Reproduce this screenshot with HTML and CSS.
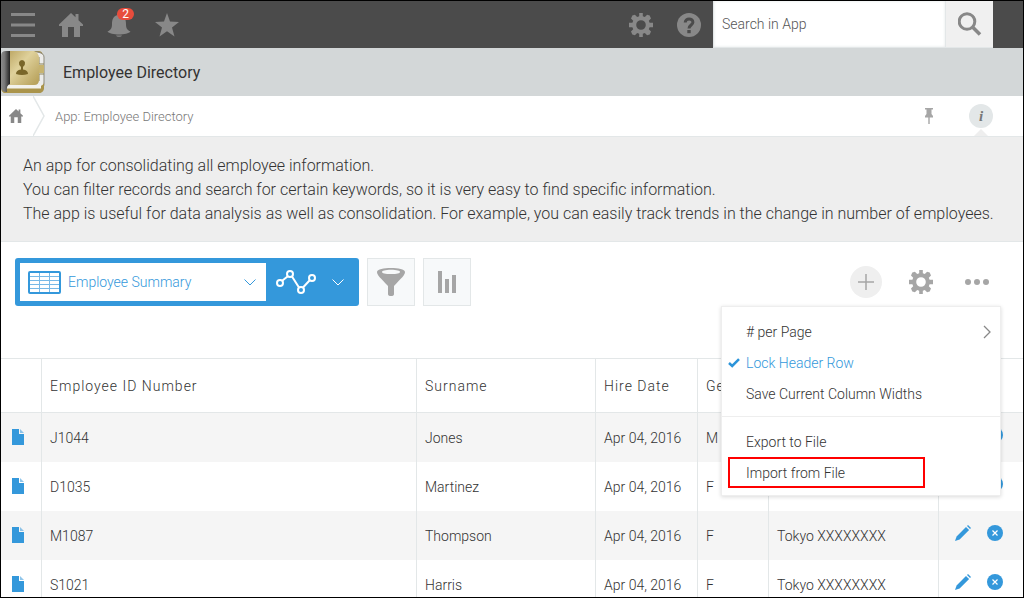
FILE: index.html
```html
<!DOCTYPE html>
<html lang="en">
<head>
<meta charset="utf-8">
<title>Employee Directory</title>
<link rel="stylesheet" href="styles.css">
</head>
<body>
<svg class="sprite" aria-hidden="true">
  <symbol id="house" viewBox="0 0 24 24"><path d="M12 0 16.5 4.300V1H19.500V7.200L24 11.500V13H21V24H15V14H9V24H3V13H0V11.500Z"/></symbol>
  <symbol id="gear" viewBox="0 0 24 24"><path fill-rule="evenodd" d="M10.200 0h3.600v3.300l2 .8 2.300-2.300 2.600.8 1.300 3-2.200 2.200.8 2h3.400v4.400h-3.400l-.8 2 2.200 2.200-1.300 3-2.600.8-2.300-2.300-2 .8V24h-3.600v-3.300l-2-.8-2.300 2.300-2.600-.8-1.300-3 2.200-2.200-.8-2H0V9.800h3.400l.8-2L2 5.600l1.300-3 2.600-.8 2.300 2.300 2-.8ZM12 7.200a4.800 4.800 0 1 0 0 9.600 4.800 4.800 0 0 0 0-9.600Z"/></symbol>
  <symbol id="document" viewBox="0 0 12 16"><path d="M0 0H7V5H12V16H0Z"/><path d="M8 0 12 4H8Z" opacity=".55"/></symbol>
  <symbol id="pencil" viewBox="0 0 16 16"><path d="M11 1.900 14.100 5 4.600 14.400 0 16 1.600 11.400Z"/><path d="M12 1 13 0 16 3 15 4Z"/></symbol>
  <symbol id="remove" viewBox="0 0 16 16"><circle cx="8" cy="8" r="8"/><path d="M5.500 5.500 10.500 10.500M10.500 5.500 5.500 10.500" stroke="#fff" stroke-width="1.200"/></symbol>
</svg>
<div class="app">
  <header class="topbar">
    <nav class="topbar-nav">
      <button class="icon-button" aria-label="Menu"><svg class="icon" viewBox="0 0 24 24"><path d="M0 0H24V3H0ZM0 10.500H24V13.500H0ZM0 21H24V24H0Z"/></svg></button>
      <a class="icon-button" href="#" aria-label="Portal"><svg class="icon"><use href="#house"/></svg></a>
      <button class="icon-button" aria-label="Notifications"><svg class="icon" viewBox="0 0 24 24"><path d="M12 0C13.500 0 14 1 14 2.200 18 3.500 19 7 19 11 19 15 20 17 23.500 18.500 22 20.500 17 21.500 12 21.500S2 20.500.5 18.500C4 17 5 15 5 11 5 7 6 3.500 10 2.200 10 1 10.500 0 12 0Z"/><path d="M9 22.500H15C14.500 24.300 9.500 24.300 9 22.500Z"/></svg><span class="count">2</span></button>
      <button class="icon-button" aria-label="Bookmarks"><svg class="icon" viewBox="0 0 24 24"><path d="M12 0 15 8.600 24 8.900 17 14.500 19.500 23.500 12 18.200 4.500 23.500 7 14.500 0 8.900 9 8.600Z"/></svg></button>
    </nav>
    <div class="topbar-tools">
      <button class="icon-button" aria-label="Settings"><svg class="icon"><use href="#gear"/></svg></button>
      <button class="icon-button" aria-label="Help"><svg class="icon" viewBox="0 0 24 24"><circle cx="12" cy="12" r="12"/><path d="M8.200 9.500C8.200 4.800 15.900 4.800 15.900 9.200 15.900 12 12 12 12 15.500" fill="none" stroke="#4b4b4b" stroke-width="3"/><path d="M10.300 17H13.700V20.200H10.300Z" fill="#4b4b4b"/></svg></button>
    </div>
    <form class="search">
      <input class="search-input" type="text" placeholder="Search in App" aria-label="Search in App">
      <button class="search-button" type="button" aria-label="Search"><svg class="icon" viewBox="0 0 24 24"><circle cx="9" cy="9.500" r="7.800" fill="none" stroke="#888" stroke-width="3"/><path d="M14.500 15 22 22.500" stroke="#888" stroke-width="3.500"/></svg></button>
    </form>
  </header>

  <div class="titlebar">
    <svg class="app-logo" viewBox="0 0 44 45" aria-hidden="true">
      <defs>
        <linearGradient id="cover" x2="1" y2="1"><stop offset="0" stop-color="#bda765"/><stop offset=".4" stop-color="#dfd19b"/><stop offset="1" stop-color="#b39c54"/></linearGradient>
        <linearGradient id="spine"><stop offset="0" stop-color="#8b8b8b"/><stop offset=".4" stop-color="#777"/><stop offset="1" stop-color="#222"/></linearGradient>
      </defs>
      <path d="M7 1H37Q42 1 42 6V38Q42 43 37 43H5Q0 43 0 37Z" fill="#a18c49"/>
      <path d="M8 2H36Q43 3 43 7V34Q43 38 38 38H6Z" fill="#ececea" stroke="#8d8a7c"/>
      <path d="M37 15H43V23H37Z" fill="#c6b36f"/>
      <path d="M38 7V14H43M43 24H38V31" fill="none" stroke="#8b8358"/>
      <path d="M6 36H39Q43 35 43 32V39Q42 43 38 43H5Q1 43 1 39Z" fill="#aa944b"/>
      <path d="M6 35H40V38.500H5Z" fill="#f3f2ec"/>
      <path d="M8 1H33Q38 3 38 8V30Q38 35 33 35H8Z" fill="url(#cover)"/>
      <path d="M5 1H9V34Q5 35 6 42 0 42 0 37V6Q0 1 5 1Z" fill="url(#spine)"/>
      <path d="M15 24Q15 20 20 19.500V17Q17.500 15 18 12.500 18.500 10 21 10T24 12.500Q24.500 15 22 17V19.500Q27 20 27 24 21 26 15 24Z" fill="#796629"/>
    </svg>
    <h1 class="title">Employee Directory</h1>
  </div>

  <div class="breadcrumb">
    <a class="crumb-home" href="#" aria-label="Home"><svg class="crumb-icon"><use href="#house"/></svg></a>
    <svg class="crumb-divider" viewBox="0 0 12 40" aria-hidden="true"><path d="M0 0 11 20 0 40" fill="none" stroke="#e3e7e8" stroke-width="1.500"/></svg>
    <a class="crumb-link" href="#">App: Employee Directory</a>
    <button class="pin" aria-label="Pin"><svg class="pin-icon" viewBox="0 0 8 16"><path d="M0 0H8V1.500H6.500V6L8 8V9.500H4.700V16H3.300V9.500H0V8L1.500 6V1.500H0Z"/></svg></button>
    <button class="info" aria-label="App description"><span class="info-mark">i</span></button>
  </div>

  <section class="description">
    <p>An app for consolidating all employee information.</p>
    <p>You can filter records and search for certain keywords, so it is very easy to find specific information.</p>
    <p>The app is useful for data analysis as well as consolidation. For example, you can easily track trends in the change in number of employees.</p>
  </section>

  <div class="toolbar">
    <div class="view-picker">
      <div class="view-field">
        <svg class="grid-icon" viewBox="0 0 33 23" aria-hidden="true"><path d="M1 5.500H32M1 9.500H32M1 13.500H32M1 17.500H32M11.500 1V22M21.500 1V22" stroke="#78b9e6"/><rect x="1" y="1" width="31" height="21" rx="1" fill="none" stroke="#3498db" stroke-width="2"/></svg>
        <select class="view-select" aria-label="View"><option>Employee Summary</option></select>
        <svg class="chevron" viewBox="0 0 12 7" aria-hidden="true"><path d="M.5.500 6 6 11.500.500" fill="none" stroke="#3498db"/></svg>
      </div>
      <button class="graph-button" aria-label="Graphs">
        <svg class="graph-icon" viewBox="0 0 40 24"><g fill="none" stroke="#fff" stroke-width="2"><path d="M6.500 10.500 11.500 6.500M16 6.500 23 17.500M27 17.500 33.500 10.500"/><circle cx="4" cy="13" r="3"/><circle cx="14" cy="4" r="3"/><circle cx="25" cy="20" r="3"/><circle cx="36" cy="8" r="3"/></g></svg>
        <svg class="chevron" viewBox="0 0 12 7"><path d="M.5.500 6 6 11.500.500" fill="none" stroke="#fff"/></svg>
      </button>
    </div>
    <button class="square-button" aria-label="Filter"><svg class="square-icon" viewBox="0 0 28 28"><path fill-rule="evenodd" d="M0 4C0-1.300 28-1.300 28 4 28 7 24.500 10 17 18V26Q17 28 14 28T11 26V18C3.500 10 0 7 0 4ZM14 1.800C2 1.800 2 6 14 6S26 1.800 14 1.800Z"/></svg></button>
    <button class="square-button" aria-label="Chart"><svg class="square-icon" viewBox="0 0 28 28"><path d="M5 3H9V25H5ZM12 11H16V25H12ZM19 7H23V25H19Z"/></svg></button>
    <div class="toolbar-actions">
      <button class="add" aria-label="Add record"><svg class="add-icon" viewBox="0 0 16 16"><path d="M0 8H16M8 0V16" stroke="#a6a6a6" stroke-width="1.500"/></svg></button>
      <button class="icon-button light" aria-label="App settings"><svg class="icon"><use href="#gear"/></svg></button>
      <button class="icon-button light" aria-label="Options"><svg class="icon" viewBox="0 0 24 24"><circle cx="3" cy="12" r="3"/><circle cx="12" cy="12" r="3"/><circle cx="21" cy="12" r="3"/></svg></button>
    </div>
    <div class="menu">
      <button class="menu-item">
        <span># per Page</span>
        <svg class="menu-arrow" viewBox="0 0 8 14"><path d="M1 1 7 7 1 13" fill="none" stroke="#888" stroke-width="1.300"/></svg>
      </button>
      <button class="menu-item checked">
        <svg class="check" viewBox="0 0 12 10"><path d="M1 5 4.200 8 11 1.200" fill="none" stroke="#2b94da" stroke-width="2.500"/></svg>
        <span>Lock Header Row</span>
      </button>
      <button class="menu-item">Save Current Column Widths</button>
      <hr class="menu-rule">
      <button class="menu-item">Export to File</button>
      <button class="menu-item highlighted">Import from File</button>
    </div>
  </div>

  <table class="records">
    <colgroup><col class="col-open"><col><col class="col-surname"><col class="col-date"><col class="col-gender"><col class="col-address"><col class="col-actions"></colgroup>
    <thead>
      <tr><th></th><th>Employee ID Number</th><th>Surname</th><th>Hire Date</th><th>Gender</th><th></th><th></th></tr>
    </thead>
    <tbody>
      <tr>
        <td><a class="open" href="#" aria-label="Open J1044"><svg class="doc-icon"><use href="#document"/></svg></a></td>
        <td>J1044</td><td>Jones</td><td>Apr 04, 2016</td><td>M</td><td></td>
        <td><div class="row-actions"><button class="row-button" aria-label="Edit"><svg class="row-icon"><use href="#pencil"/></svg></button><button class="row-button" aria-label="Delete"><svg class="row-icon"><use href="#remove"/></svg></button></div></td>
      </tr>
      <tr>
        <td><a class="open" href="#" aria-label="Open D1035"><svg class="doc-icon"><use href="#document"/></svg></a></td>
        <td>D1035</td><td>Martinez</td><td>Apr 04, 2016</td><td>F</td><td></td>
        <td><div class="row-actions"><button class="row-button" aria-label="Edit"><svg class="row-icon"><use href="#pencil"/></svg></button><button class="row-button" aria-label="Delete"><svg class="row-icon"><use href="#remove"/></svg></button></div></td>
      </tr>
      <tr>
        <td><a class="open" href="#" aria-label="Open M1087"><svg class="doc-icon"><use href="#document"/></svg></a></td>
        <td>M1087</td><td>Thompson</td><td>Apr 04, 2016</td><td>F</td><td>Tokyo XXXXXXXX</td>
        <td><div class="row-actions"><button class="row-button" aria-label="Edit"><svg class="row-icon"><use href="#pencil"/></svg></button><button class="row-button" aria-label="Delete"><svg class="row-icon"><use href="#remove"/></svg></button></div></td>
      </tr>
      <tr>
        <td><a class="open" href="#" aria-label="Open S1021"><svg class="doc-icon"><use href="#document"/></svg></a></td>
        <td>S1021</td><td>Harris</td><td>Apr 04, 2016</td><td>F</td><td>Tokyo XXXXXXXX</td>
        <td><div class="row-actions"><button class="row-button" aria-label="Edit"><svg class="row-icon"><use href="#pencil"/></svg></button><button class="row-button" aria-label="Delete"><svg class="row-icon"><use href="#remove"/></svg></button></div></td>
      </tr>
    </tbody>
  </table>
</div>
</body>
</html>
```
FILE: styles.css
```css
* { box-sizing: border-box; }

body {
  margin: 0;
  font-family: Roboto, "Liberation Sans", sans-serif;
  font-size: 14px;
  font-weight: 300;
  color: #333;
  background: #fff;
}

button, input, select { font: inherit; color: inherit; }

button {
  margin: 0;
  padding: 0;
  border: 0;
  background: none;
  cursor: pointer;
}

a { color: inherit; text-decoration: none; }

.sprite { display: none; }

.app {
  height: 100vh;
  overflow: hidden;
  border: 1px solid #000;
}

/* Top bar */
.topbar {
  display: flex;
  align-items: center;
  height: 47px;
  padding: 0 30px 0 10px;
  background: #4b4b4b;
}

.topbar-nav, .topbar-tools { display: flex; gap: 24px; }
.topbar-tools { margin-left: auto; margin-right: 12px; }

.icon-button {
  position: relative;
  display: flex;
  color: #888;
}

.icon-button.light { color: #a6a6a6; }

.icon {
  display: block;
  width: 24px;
  height: 24px;
  fill: currentColor;
}

.count {
  position: absolute;
  top: -5px;
  right: -3px;
  width: 17px;
  border-radius: 6px;
  background: #e74c3c;
  color: #fff;
  font-size: 12px;
  font-weight: 400;
  line-height: 12px;
  text-align: center;
}

.search { display: flex; align-self: stretch; }

.search-input {
  width: 232px;
  padding: 0 8px;
  border: 1px solid #e3e7e8;
  border-top: 0;
  border-right: 0;
  border-radius: 0;
  background: #fff;
  outline: 0;
  box-shadow: inset 0 0 3px #e3e7e8;
}

.search-input::placeholder { color: #555; opacity: 1; }

.search-button {
  display: flex;
  align-items: center;
  justify-content: center;
  width: 48px;
  border: 1px solid #e3e7e8;
  border-width: 0 0 1px 1px;
  background: #f0f0f0;
}

/* Title */
.titlebar {
  display: flex;
  align-items: center;
  gap: 18px;
  height: 48px;
  background: #d3d7d8;
}

.app-logo { width: 44px; height: 45px; }

.title {
  margin: 0;
  font-size: 16px;
  font-weight: 400;
}

/* Breadcrumb */
.breadcrumb {
  display: flex;
  align-items: center;
  height: 41px;
  padding: 0 30px 0 8px;
  border-bottom: 1px solid #e3e7e8;
  color: #777;
}

.crumb-icon { display: block; width: 14px; height: 14px; fill: #888; }
.crumb-divider { width: 12px; height: 40px; margin: 0 10px; }
.crumb-link { font-size: 13px; }
.pin { margin-left: auto; margin-right: 36px; }
.pin-icon { display: block; width: 8px; height: 16px; fill: #a6a6a6; }

.info {
  position: relative;
  width: 24px;
  height: 24px;
  border-radius: 50%;
  background: #e3e7e8;
}

.info::after {
  content: "";
  position: absolute;
  top: 25px;
  left: 5px;
  border: 7px solid transparent;
  border-top: 0;
  border-bottom-color: #eee;
}

.info-mark {
  font: italic bold 15px "Liberation Serif", serif;
  color: #777;
}

/* Description */
.description {
  padding: 17px 22px 15px;
  border-bottom: 1px solid #e3e7e8;
  background: #eee;
  font-size: 16px;
  line-height: 24px;
}

.description p { margin: 0; }

/* Toolbar */
.toolbar {
  position: relative;
  display: flex;
  align-items: center;
  gap: 8px;
  padding: 16px 34px 52px 14px;
}

.view-picker {
  display: flex;
  padding: 5px;
  border-radius: 3px;
  background: #3498db;
  color: #3498db;
}

.view-field {
  display: flex;
  align-items: center;
  width: 246px;
  height: 38px;
  padding: 0 10px 0 8px;
  background: #fff;
}

.grid-icon { width: 33px; height: 23px; }

.view-select {
  flex: 1;
  min-width: 0;
  height: 38px;
  padding: 0 7px;
  border: 0;
  background: none;
  appearance: none;
  outline: 0;
}

.chevron { width: 12px; height: 7px; }

.graph-button {
  display: flex;
  align-items: center;
  gap: 16px;
  padding: 0 10px;
}

.graph-icon { width: 40px; height: 24px; }

.square-button {
  display: flex;
  align-items: center;
  justify-content: center;
  width: 48px;
  height: 48px;
  border: 1px solid #e3e7e8;
  background: #f7f9fa;
}

.square-icon { width: 28px; height: 28px; fill: #a6a6a6; }

.toolbar-actions {
  display: flex;
  align-items: center;
  margin-left: auto;
}

.toolbar-actions .light { margin-left: 32px; }

.toolbar-actions .add + .light { margin-left: 27px; }

.add {
  display: flex;
  align-items: center;
  justify-content: center;
  width: 32px;
  height: 32px;
  border-radius: 50%;
  background: #efefef;
}

.add-icon { width: 16px; height: 16px; }

/* Options menu */
.menu {
  position: absolute;
  z-index: 1;
  top: 64px;
  right: 22px;
  width: 280px;
  padding: 9px 6px 7px;
  border: 1px solid #eee;
  background: #fff;
  box-shadow: 0 1px 4px rgba(0, 0, 0, .15);
}

.menu-item {
  position: relative;
  display: flex;
  align-items: center;
  justify-content: space-between;
  width: 100%;
  height: 31px;
  padding: 0 2px 0 18px;
}

.menu-item.checked { color: #3498db; justify-content: flex-start; }

.menu-item.highlighted {
  width: 197px;
  padding-left: 16px;
  border: 2px solid #f00;
}

.menu-arrow { width: 10px; height: 14px; }

.check {
  position: absolute;
  left: 0;
  width: 12px;
  height: 10px;
}

.menu-rule {
  margin: 7px -6px 9px;
  border: 0;
  border-top: 1px solid #eee;
}

/* Records */
.records {
  width: 100%;
  border-collapse: separate;
  border-spacing: 0;
  table-layout: fixed;
}

.col-open { width: 41px; }
.col-surname { width: 179px; }
.col-date { width: 102px; }
.col-gender { width: 71px; }
.col-address { width: 170px; }
.col-actions { width: 84px; }

.records th, .records td {
  padding: 0 8px;
  border-right: 1px solid #e3e7e8;
  text-align: left;
  white-space: nowrap;
  overflow: hidden;
}

.records th:last-child, .records td:last-child { border-right: 0; }

.records th {
  height: 55px;
  border-top: 1px solid #e3e7e8;
  border-bottom: 1px solid #e3e7e8;
  font-weight: 300;
  letter-spacing: 1px;
}

.records td { height: 49px; }
.records tbody tr:nth-child(odd) { background: #f5f5f5; }

.records td:first-child { padding: 0 0 2px 11px; }
.open { display: block; width: 12px; }
.doc-icon { display: block; width: 12px; height: 16px; fill: #3498db; }

.records td:last-child { padding: 0 0 5px 16px; }
.row-actions { display: flex; gap: 16px; }
.row-icon { display: block; width: 16px; height: 16px; fill: #3498db; }
```
